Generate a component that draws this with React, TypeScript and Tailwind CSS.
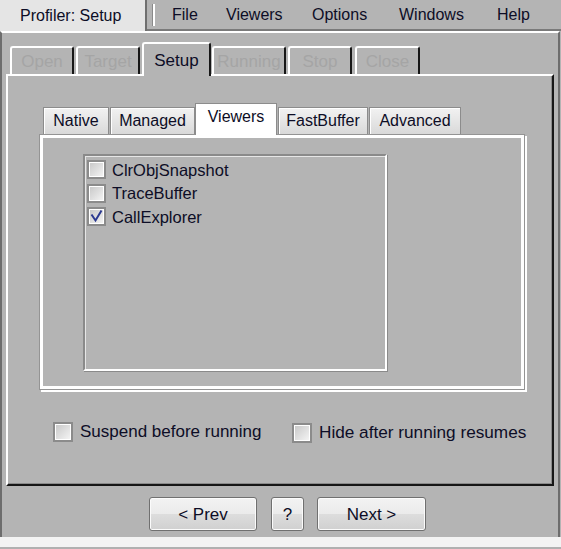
import React from 'react'

const FONT = "font-['Liberation_Sans',Arial,sans-serif]"
const INK = 'text-[#0d0d26]'

const MENU = [
  { label: 'File', w: 'w-[54px]' },
  { label: 'Viewers', w: 'w-[86px]' },
  { label: 'Options', w: 'w-[87px]' },
  { label: 'Windows', w: 'w-[98px]' },
  { label: 'Help', w: 'w-[50px]' },
]

const WIZARD_TABS = [
  { label: 'Open', w: 'w-[64px]', ml: 'ml-0' },
  { label: 'Target', w: 'w-[64px]', ml: 'ml-[2px]' },
  { label: 'Setup', w: 'w-[69px]', ml: 'ml-[2px]', active: true },
  { label: 'Running', w: 'w-[74px]', ml: 'ml-[1px]' },
  { label: 'Stop', w: 'w-[64px]', ml: 'ml-[2px]' },
  { label: 'Close', w: 'w-[65px]', ml: 'ml-[3px]' },
]

const INNER_TABS = [
  { label: 'Native', w: 'w-[66px]', ml: 'ml-[35px]' },
  { label: 'Managed', w: 'w-[85px]', ml: 'ml-[1px]' },
  { label: 'Viewers', w: 'w-[82px]', ml: 'ml-0', active: true },
  { label: 'FastBuffer', w: 'w-[90px]', ml: 'ml-[1px]' },
  { label: 'Advanced', w: 'w-[92px]', ml: 'ml-[1px]' },
]

const VIEWERS = [
  { name: 'ClrObjSnapshot', checked: false },
  { name: 'TraceBuffer', checked: false },
  { name: 'CallExplorer', checked: true },
]

function Check({ checked, size }: { checked?: boolean; size: string }) {
  return (
    <span
      className={`relative ${size} shrink-0 border-2 border-[#8b8b8b] bg-[linear-gradient(135deg,#c6c6c6,#f6f6f6)] shadow-[inset_0_0_0_1px_#ffffff]`}
    >
      {checked && (
        <svg viewBox="0 0 15 15" className="absolute inset-0 w-full h-full">
          <path d="M2.5 5.5 L6.5 11.5 L12.5 1.5" fill="none" stroke="#2b3990" strokeWidth="2" />
        </svg>
      )}
    </span>
  )
}

function Button({ label, w }: { label: string; w: string }) {
  return (
    <button
      className={`${w} h-[34px] flex items-center justify-center rounded-[3px] border border-[#707070] bg-[linear-gradient(#f3f3f3_0%,#ebebeb_50%,#dddddd_51%,#d0d0d0_100%)] shadow-[inset_0_0_0_1px_#fbfbfb] text-[17px] leading-none ${INK}`}
    >
      {label}
    </button>
  )
}

export default function App() {
  return (
    <div className={`w-[561px] h-[549px] flex flex-col bg-[#b4b4b4] overflow-hidden whitespace-nowrap ${FONT}`}>
      {/* Header: window title tab + menu */}
      <div className="h-[31px] flex shrink-0">
        <div className={`w-[147px] bg-[#e5e5e5] border-r-2 border-[#6f6f6f] flex items-center pl-[20px] text-[16px] leading-none ${INK}`}>
          Profiler: Setup
        </div>
        <div className={`flex-1 flex items-center border-b-2 border-[#7a7a7a] text-[16px] leading-none ${INK}`}>
          <span className="ml-[5px] w-[3px] h-[22px] border-l border-[#8a8a8a] bg-white" />
          <div className="flex ml-[17px]">
            {MENU.map((m) => (
              <span key={m.label} className={m.w}>{m.label}</span>
            ))}
          </div>
        </div>
      </div>

      {/* Body */}
      <div className="flex-1 flex flex-col border-t-2 border-t-white border-l-2 border-l-[#6d6d6d] border-r-2 border-r-[#6d6d6d] mr-[1px]">
        {/* Wizard tabs */}
        <div className="h-[41px] flex items-end pl-[8px] shrink-0">
          {WIZARD_TABS.map((t) => (
            <div
              key={t.label}
              className={`${t.w} ${t.ml} flex items-center justify-center border-t-2 border-l-2 border-t-white border-l-white border-r-2 border-r-[#161616] rounded-tl-[3px] rounded-tr-[3px] text-[17px] leading-none ${
                t.active ? `h-[34px] -mb-[2px] relative z-10 bg-[#b4b4b4] ${INK}` : 'h-[28px] text-[#a5a5a5]'
              }`}
            >
              {t.label}
            </div>
          ))}
        </div>

        {/* Tab page */}
        <div className="mx-[4px] h-[412px] shrink-0 flex flex-col border-t-2 border-l-2 border-t-white border-l-white border-r-2 border-b-2 border-r-[#161616] border-b-[#161616] shadow-[inset_-1px_-1px_0_#8a8a8a]">
          {/* Inner tabs */}
          <div className="h-[58px] flex items-end shrink-0">
            {INNER_TABS.map((t) => (
              <div
                key={t.label}
                className={`${t.w} ${t.ml} flex items-center justify-center border border-b-0 border-[#8c8c8c] text-[16px] leading-none ${INK} ${
                  t.active
                    ? 'h-[32px] -mb-[1px] relative z-10 bg-white pb-[5px]'
                    : 'h-[27px] bg-[linear-gradient(#f2f2f2,#d9d9d9)] shadow-[inset_1px_1px_0_#ffffff]'
                }`}
              >
                {t.label}
              </div>
            ))}
          </div>

          {/* Inner panel */}
          <div className="ml-[31px] w-[486px] h-[256px] shrink-0 border border-[#949494] shadow-[inset_0_0_0_3px_#ffffff,2px_2px_0_#ffffff] p-[4px]">
            <div className="ml-[39px] mt-[15px] w-[304px] h-[217px] border-2 border-t-[#8a8a8a] border-l-[#8a8a8a] border-r-white border-b-white shadow-[inset_1px_1px_0_#e6e6e6,1px_1px_0_#8a8a8a] pt-[2px] pl-[2px]">
              {VIEWERS.map((v) => (
                <div key={v.name} className="h-[23.5px] flex items-center gap-[6px]">
                  <Check checked={v.checked} size="w-[19px] h-[19px]" />
                  <span className={`text-[16.5px] leading-none ${INK}`}>{v.name}</span>
                </div>
              ))}
            </div>
          </div>

          {/* Options */}
          <div className="mt-[30px] pl-[45px] flex items-center">
            <label className="w-[239px] flex items-center gap-[7px]">
              <Check size="w-[20px] h-[20px]" />
              <span className={`text-[17px] leading-none ${INK}`}>Suspend before running</span>
            </label>
            <label className="flex items-center gap-[7px] mt-[3px]">
              <Check size="w-[20px] h-[20px]" />
              <span className={`text-[17.2px] leading-none ${INK}`}>Hide after running resumes</span>
            </label>
          </div>
        </div>

        {/* Navigation buttons */}
        <div className="flex-1 flex items-start pt-[11px] pl-[147px]">
          <Button label="< Prev" w="w-[108px]" />
          <div className="ml-[14px]">
            <Button label="?" w="w-[33px]" />
          </div>
          <div className="ml-[13px]">
            <Button label="Next >" w="w-[109px]" />
          </div>
        </div>
      </div>

      {/* Status strip */}
      <div className="h-[12px] shrink-0 bg-[#f3f3f3] border-b-2 border-[#b0b0b0]" />
    </div>
  )
}
